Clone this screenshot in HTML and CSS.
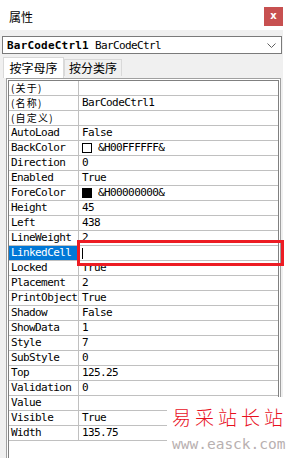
FILE: index.html
```html
<!DOCTYPE html>
<html lang="zh">

<head>
    <meta charset="UTF-8">
    <meta name="viewport" content="width=device-width, initial-scale=1.0">
    <title>属性</title>
    <link rel="stylesheet" href="styles.css">
</head>

<body>

    <div class="window">
        <div class="titlebar">
            <span class="title">属性</span>
            <span class="close">x</span>
        </div>

        <div class="combo">
            <span class="combo-text"><b>BarCodeCtrl1</b> BarCodeCtrl</span>
            <svg class="chevron" width="9" height="5" viewBox="0 0 9 5">
                <path d="M0.5 0.5 L4.5 4.5 L8.5 0.5" fill="none" stroke="#606060" stroke-width="1" />
            </svg>
        </div>

        <div class="tabs">
            <div class="tab active">按字母序</div>
            <div class="tab">按分类序</div>
        </div>

        <div class="grid">
            <div class="grid-inner">
                <div class="row"><div class="name cjk">(关于)</div><div class="value"></div></div>
                <div class="row"><div class="name cjk">(名称)</div><div class="value">BarCodeCtrl1</div></div>
                <div class="row"><div class="name cjk">(自定义)</div><div class="value"></div></div>
                <div class="row"><div class="name">AutoLoad</div><div class="value">False</div></div>
                <div class="row"><div class="name">BackColor</div><div class="value"><span class="swatch white"></span>&amp;H00FFFFFF&amp;</div></div>
                <div class="row"><div class="name">Direction</div><div class="value">0</div></div>
                <div class="row"><div class="name">Enabled</div><div class="value">True</div></div>
                <div class="row"><div class="name">ForeColor</div><div class="value"><span class="swatch black"></span>&amp;H00000000&amp;</div></div>
                <div class="row"><div class="name">Height</div><div class="value">45</div></div>
                <div class="row"><div class="name">Left</div><div class="value">438</div></div>
                <div class="row"><div class="name">LineWeight</div><div class="value">2</div></div>
                <div class="row"><div class="name selected">LinkedCell</div><div class="value"><span class="caret"></span></div></div>
                <div class="row"><div class="name">Locked</div><div class="value">True</div></div>
                <div class="row"><div class="name">Placement</div><div class="value">2</div></div>
                <div class="row"><div class="name">PrintObject</div><div class="value">True</div></div>
                <div class="row"><div class="name">Shadow</div><div class="value">False</div></div>
                <div class="row"><div class="name">ShowData</div><div class="value">1</div></div>
                <div class="row"><div class="name">Style</div><div class="value">7</div></div>
                <div class="row"><div class="name">SubStyle</div><div class="value">0</div></div>
                <div class="row"><div class="name">Top</div><div class="value">125.25</div></div>
                <div class="row"><div class="name">Validation</div><div class="value">0</div></div>
                <div class="row"><div class="name">Value</div><div class="value"></div></div>
                <div class="row"><div class="name">Visible</div><div class="value">True</div></div>
                <div class="row"><div class="name">Width</div><div class="value">135.75</div></div>
            </div>
        </div>
    </div>

    <!-- red frame around the LinkedCell value -->
    <div class="mark"></div>

    <div class="watermark">
        <div class="wm-cn">易采站长站</div>
        <div class="wm-url">www.easck.com</div>
    </div>

</body>

</html>
```

FILE: styles.css
```css
* {
    padding: 0;
    margin: 0;
    box-sizing: border-box;
}

body {
    width: 288px;
    height: 458px;
    overflow: hidden;
    background-color: #fff;
    position: relative;
    font-family: "DejaVu Sans Mono", "Noto Sans CJK SC", monospace;
}

.window {
    width: 283px;
    height: 458px;
    background-color: #f0f0f0;
}

.titlebar {
    height: 30px;
    background-color: #fff;
    display: flex;
    justify-content: space-between;
    align-items: center;
    padding: 2px 0 0 9px;
}

.title {
    font-family: "Noto Sans CJK SC", sans-serif;
    font-size: 12px;
    color: #000;
}

.close {
    width: 19px;
    height: 19px;
    background-color: #c75050;
    color: #fff;
    font-family: "DejaVu Sans", sans-serif;
    font-weight: bold;
    font-size: 10px;
    line-height: 17px;
    text-align: center;
}

.combo {
    margin: 6px 1px 0 2px;
    height: 18px;
    border: 1px solid #7a7a7a;
    background-color: #fff;
    display: flex;
    align-items: center;
    justify-content: space-between;
    padding: 0 5px 0 4px;
}

.combo-text {
    font-size: 11px;
    letter-spacing: -0.6px;
    white-space: nowrap;
}

.combo-text b {
    letter-spacing: 0.2px;
}

.tabs {
    display: flex;
    align-items: flex-end;
    height: 24px;
    padding-left: 3px;
}

.tab {
    font-family: "Noto Sans CJK SC", sans-serif;
    font-size: 12px;
    height: 17px;
    line-height: 15px;
    width: 58px;
    text-align: center;
    border: 1px solid #d9d9d9;
    border-bottom: none;
    background-color: #f0f0f0;
    margin-bottom: 2px;
}

.tab.active {
    height: 21px;
    line-height: 19px;
    width: 61px;
    background-color: #fff;
    margin-bottom: 0;
}

.grid {
    margin-left: 6px;
    width: 275px;
    height: 400px;
    border: 1px solid #a0a0a0;
    border-bottom: none;
    padding: 1px 1px 0 1px;
    background-color: #fff;
}

.grid-inner {
    height: 100%;
    border: 1px solid #808080;
    border-bottom: none;
}

.row {
    display: flex;
    height: 15px;
    border-bottom: 1px solid #c0c0c0;
    font-size: 11px;
    letter-spacing: -0.6px;
    line-height: 14px;
    color: #000;
}

.name {
    width: 70px;
    border-right: 1px solid #c0c0c0;
    padding-left: 2px;
    white-space: nowrap;
}

.name.cjk {
    font-family: "Noto Sans CJK SC", sans-serif;
    font-size: 10px;
    line-height: 14px;
    letter-spacing: 1.2px;
}

.name.selected {
    background-color: #0078d7;
    color: #fff;
}

.value {
    flex: 1;
    padding-left: 3px;
    display: flex;
    align-items: center;
    white-space: nowrap;
}

.swatch {
    width: 10px;
    height: 10px;
    border: 1px solid #000;
    margin-right: 6px;
}

.swatch.white {
    background-color: #fff;
}

.swatch.black {
    background-color: #000;
}

.caret {
    width: 1px;
    height: 11px;
    background-color: #000;
}

.mark {
    position: absolute;
    left: 77px;
    top: 240px;
    width: 207px;
    height: 26px;
    border: 3px solid #ed1c24;
}

.watermark {
    position: absolute;
    left: 167px;
    top: 397px;
    width: 121px;
    height: 61px;
    background-color: #fff;
    padding: 9px 0 0 5px;
}

.wm-cn {
    font-family: "Noto Sans CJK SC", sans-serif;
    font-weight: 300;
    font-size: 19px;
    line-height: 22px;
    letter-spacing: 4px;
    color: #e8101e;
}

.wm-url {
    font-family: "DejaVu Sans Mono", monospace;
    font-size: 14.5px;
    line-height: 18px;
    margin-top: 7px;
    color: #b8b0b0;
}
```
